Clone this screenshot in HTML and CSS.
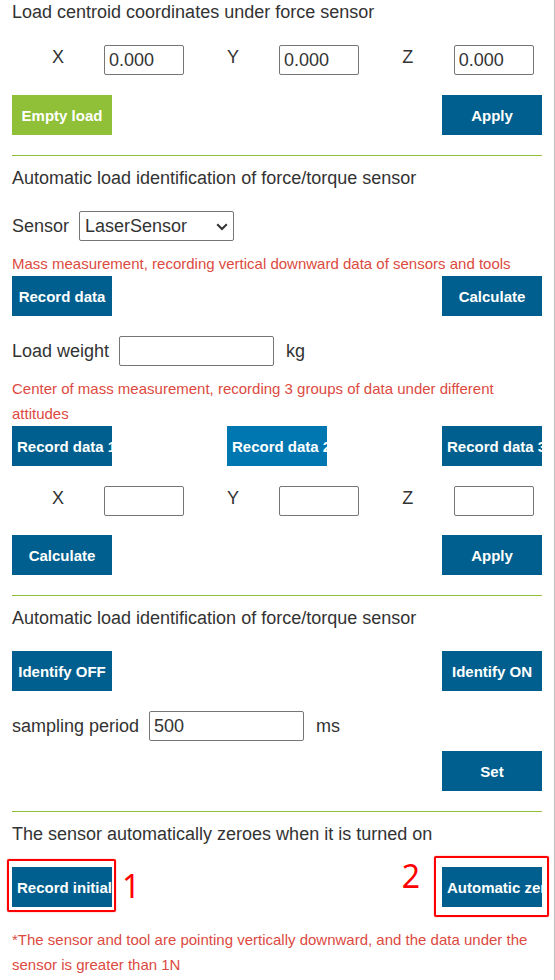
FILE: index.html
```html
<!DOCTYPE html>
<html lang="en">
<head>
<meta charset="utf-8">
<title>Force sensor load</title>
<link rel="stylesheet" href="styles.css">
</head>
<body>
<main class="panel">
  <section class="section">
    <h2 class="title">Load centroid coordinates under force sensor</h2>
    <div class="axes">
      <div class="axis"><label for="cx">X</label><input id="cx" type="text" value="0.000"></div>
      <div class="axis"><label for="cy">Y</label><input id="cy" type="text" value="0.000"></div>
      <div class="axis"><label for="cz">Z</label><input id="cz" type="text" value="0.000"></div>
    </div>
    <div class="actions spaced">
      <button type="button" class="btn btn-green">Empty load</button>
      <button type="button" class="btn">Apply</button>
    </div>
  </section>

  <section class="section">
    <h2 class="title">Automatic load identification of force/torque sensor</h2>
    <div class="field">
      <label for="sensor">Sensor</label>
      <span class="select-box">
        <select id="sensor"><option>LaserSensor</option></select>
        <svg class="chevron" viewBox="0 0 12 8" aria-hidden="true"><path d="M1.2 1.2 6 6 10.8 1.2"/></svg>
      </span>
    </div>
    <p class="note">Mass measurement, recording vertical downward data of sensors and tools</p>
    <div class="actions">
      <button type="button" class="btn">Record data</button>
      <button type="button" class="btn">Calculate</button>
    </div>
    <div class="field spaced">
      <label for="weight">Load weight</label>
      <input id="weight" type="text">
      <span class="unit">kg</span>
    </div>
    <p class="note">Center of mass measurement, recording 3 groups of data under different attitudes</p>
    <div class="actions">
      <button type="button" class="btn">Record data 1</button>
      <button type="button" class="btn btn-active">Record data 2</button>
      <button type="button" class="btn">Record data 3</button>
    </div>
    <div class="axes spaced">
      <div class="axis"><label for="mx">X</label><input id="mx" type="text"></div>
      <div class="axis"><label for="my">Y</label><input id="my" type="text"></div>
      <div class="axis"><label for="mz">Z</label><input id="mz" type="text"></div>
    </div>
    <div class="actions results">
      <button type="button" class="btn">Calculate</button>
      <button type="button" class="btn">Apply</button>
    </div>
  </section>

  <section class="section">
    <h2 class="title">Automatic load identification of force/torque sensor</h2>
    <div class="actions">
      <button type="button" class="btn">Identify OFF</button>
      <button type="button" class="btn">Identify ON</button>
    </div>
    <div class="field spaced">
      <label for="period">sampling period</label>
      <input id="period" type="text" value="500">
      <span class="unit">ms</span>
    </div>
    <div class="actions end">
      <button type="button" class="btn">Set</button>
    </div>
  </section>

  <section class="section">
    <h2 class="title">The sensor automatically zeroes when it is turned on</h2>
    <div class="actions">
      <div class="marked">
        <button type="button" class="btn">Record initial</button>
        <span class="frame frame-first"></span>
        <span class="step step-first">1</span>
      </div>
      <div class="marked">
        <button type="button" class="btn">Automatic zero</button>
        <span class="frame frame-second"></span>
        <span class="step step-second">2</span>
      </div>
    </div>
    <p class="note spaced">*The sensor and tool are pointing vertically downward, and the data under the sensor is greater than 1N</p>
  </section>
</main>
</body>
</html>
```
FILE: styles.css
```css
* {
  box-sizing: border-box;
}

body {
  margin: 0;
  background: #fff;
  color: #333;
  font-family: "Liberation Sans", Arial, sans-serif;
  font-size: 18px;
  line-height: 25px;
}

.panel {
  min-height: 100vh;
  padding: 0 12px;
  border-right: 1px solid #c0c0c0;
}

.section + .section {
  margin-top: 20px;
  padding-top: 10px;
  border-top: 1px solid #8ebf37;
}

.title {
  margin: 0 0 20px;
  font-size: 18px;
  font-weight: 400;
}

.spaced {
  margin-top: 20px;
}

.axes {
  display: grid;
  grid-template-columns: repeat(3, 33%);
}

.axis {
  display: flex;
}

.axis label {
  width: 92px;
  text-align: center;
}

.axis input {
  width: 80px;
}

input,
select {
  height: 30px;
  padding: 0 4px;
  border: 1px solid #767676;
  border-radius: 2px;
  background: #fff;
  color: #333;
  font: inherit;
}

.field {
  display: flex;
  align-items: center;
  gap: 10px;
  margin-bottom: 10px;
}

.field input,
.field select {
  width: 155px;
}

.unit {
  padding-left: 2px;
}

.select-box {
  display: flex;
  position: relative;
}

select {
  appearance: none;
  padding-left: 5px;
}

.chevron {
  position: absolute;
  top: 12px;
  right: 6px;
  width: 12px;
  height: 8px;
  fill: none;
  stroke: #333;
  stroke-width: 2;
  pointer-events: none;
}

.note {
  margin: 0;
  color: #dc4a41;
  font-size: 15px;
}

.note.spaced {
  margin-top: 20px;
}

.actions {
  display: flex;
  justify-content: space-between;
}

.results {
  margin-top: 19px;
}

.end {
  justify-content: flex-end;
}

.btn {
  display: block;
  width: 100px;
  height: 40px;
  padding: 0 5px;
  border: 0;
  overflow: hidden;
  background: #005f8e;
  color: #fff;
  font: bold 15px/25px "Liberation Sans", Arial, sans-serif;
  white-space: nowrap;
}

.btn-green {
  background: #8fc037;
}

.btn-active {
  background: #0077b0;
}

.marked {
  position: relative;
}

.frame {
  position: absolute;
  border: 2px solid #f00;
  border-radius: 2px;
  box-shadow: 0 0 1px #f00;
}

.frame-first {
  inset: -8px -4px -5px -5px;
}

.frame-second {
  inset: -11px -7px -10px -8px;
}

.step {
  position: absolute;
  color: #f00;
  font: 32px/32px "Noto Sans", sans-serif;
}

.step-first {
  top: 3px;
  left: 110px;
}

.step-second {
  top: -7px;
  right: 122px;
}
```
